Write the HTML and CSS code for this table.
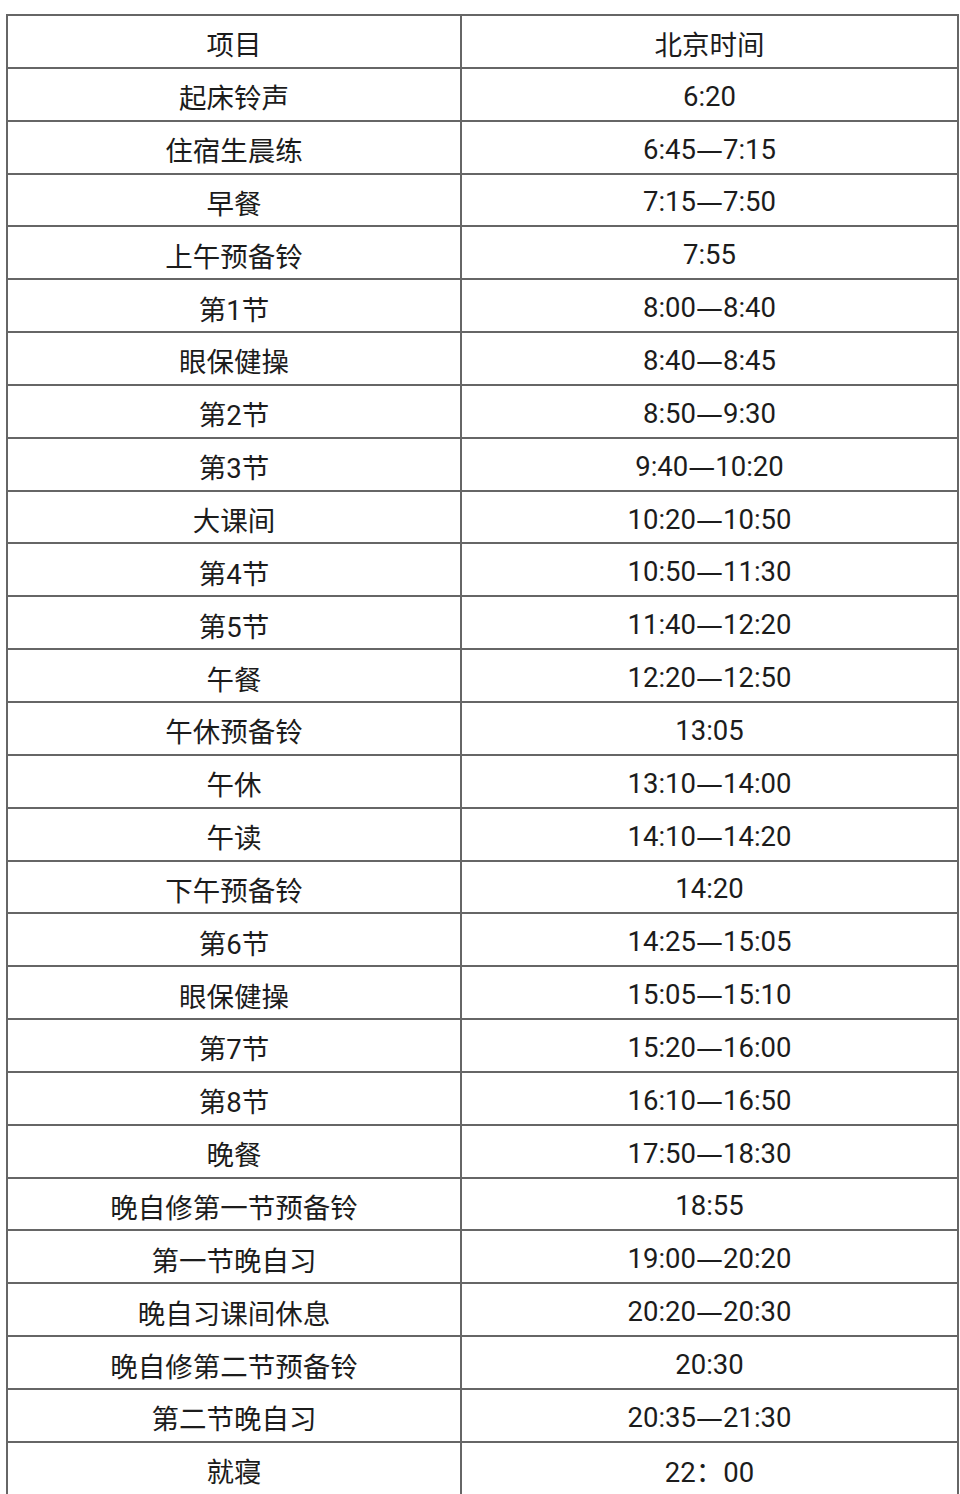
FILE: index.html
```html
<!DOCTYPE html>
<html lang="zh-CN">
<head>
<meta charset="utf-8">
<title>作息时间表</title>
<link rel="stylesheet" href="styles.css">
</head>
<body>
<div class="page">
  <div class="schedule">
    <div class="cell">项目</div><div class="cell">北京时间</div>
    <div class="cell">起床铃声</div><div class="cell">6:20</div>
    <div class="cell">住宿生晨练</div><div class="cell">6:45<span class="dash">—</span>7:15</div>
    <div class="cell">早餐</div><div class="cell">7:15<span class="dash">—</span>7:50</div>
    <div class="cell">上午预备铃</div><div class="cell">7:55</div>
    <div class="cell">第1节</div><div class="cell">8:00<span class="dash">—</span>8:40</div>
    <div class="cell">眼保健操</div><div class="cell">8:40<span class="dash">—</span>8:45</div>
    <div class="cell">第2节</div><div class="cell">8:50<span class="dash">—</span>9:30</div>
    <div class="cell">第3节</div><div class="cell">9:40<span class="dash">—</span>10:20</div>
    <div class="cell">大课间</div><div class="cell">10:20<span class="dash">—</span>10:50</div>
    <div class="cell">第4节</div><div class="cell">10:50<span class="dash">—</span>11:30</div>
    <div class="cell">第5节</div><div class="cell">11:40<span class="dash">—</span>12:20</div>
    <div class="cell">午餐</div><div class="cell">12:20<span class="dash">—</span>12:50</div>
    <div class="cell">午休预备铃</div><div class="cell">13:05</div>
    <div class="cell">午休</div><div class="cell">13:10<span class="dash">—</span>14:00</div>
    <div class="cell">午读</div><div class="cell">14:10<span class="dash">—</span>14:20</div>
    <div class="cell">下午预备铃</div><div class="cell">14:20</div>
    <div class="cell">第6节</div><div class="cell">14:25<span class="dash">—</span>15:05</div>
    <div class="cell">眼保健操</div><div class="cell">15:05<span class="dash">—</span>15:10</div>
    <div class="cell">第7节</div><div class="cell">15:20<span class="dash">—</span>16:00</div>
    <div class="cell">第8节</div><div class="cell">16:10<span class="dash">—</span>16:50</div>
    <div class="cell">晚餐</div><div class="cell">17:50<span class="dash">—</span>18:30</div>
    <div class="cell">晚自修第一节预备铃</div><div class="cell">18:55</div>
    <div class="cell">第一节晚自习</div><div class="cell">19:00<span class="dash">—</span>20:20</div>
    <div class="cell">晚自习课间休息</div><div class="cell">20:20<span class="dash">—</span>20:30</div>
    <div class="cell">晚自修第二节预备铃</div><div class="cell">20:30</div>
    <div class="cell">第二节晚自习</div><div class="cell">20:35<span class="dash">—</span>21:30</div>
    <div class="cell">就寝</div><div class="cell">22：00</div>
  </div>
</div>
</body>
</html>
```

FILE: styles.css
```css
html, body {
  margin: 0;
  padding: 0;
  background: #ffffff;
  overflow: hidden;
}

.page {
  padding: 14px 0 0 6px;
}

.schedule {
  display: grid;
  grid-template-columns: 452px 495px;
  grid-auto-rows: 50.85px;
  gap: 2px;
  padding: 2px;
  width: 953px;
  box-sizing: border-box;
  background: #666666;
  font-family: Roboto, "Noto Sans CJK SC", sans-serif;
  font-size: 27.5px;
  color: #1c1c1c;
}

.cell {
  background: #ffffff;
  display: flex;
  align-items: center;
  justify-content: center;
  padding-top: 4px;
  box-sizing: border-box;
  white-space: nowrap;
}

.dash {
  font-family: "DejaVu Sans", sans-serif;
  font-size: 27px;
}
```
